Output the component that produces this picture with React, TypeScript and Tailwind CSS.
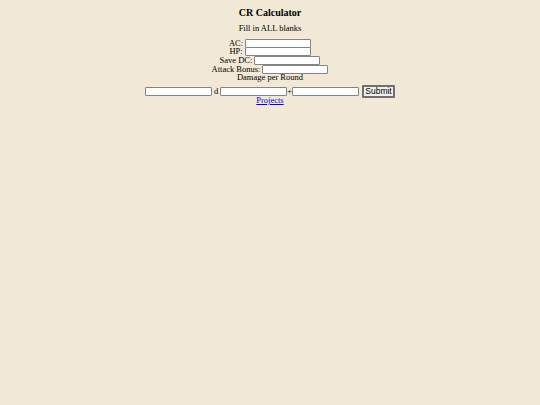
export default function App() {
  const field =
    "w-[66px] h-[9px] bg-white border border-[#858585] rounded-[1px] outline-none";

  return (
    <div
      className="min-h-[405px] w-full bg-[#f2e8d6] text-black text-center flex flex-col items-center pt-[8px] text-[8.5px]"
      style={{ fontFamily: '"Liberation Serif", "Times New Roman", serif' }}
    >
      <h3 className="h-[10px] leading-[10px] text-[10px] font-bold">CR Calculator</h3>
      <p className="mt-[6px] h-[9px] leading-[9px]">Fill in ALL blanks</p>

      <form className="mt-[5.7px] flex flex-col items-center" onSubmit={(e) => e.preventDefault()}>
        <div className="h-[8.7px] flex items-center">
          <span>AC:</span>
          <input className={`${field} ml-[2px]`} />
        </div>
        <div className="h-[8.7px] flex items-center">
          <span>HP:</span>
          <input className={`${field} ml-[2px]`} />
        </div>
        <div className="h-[8.7px] flex items-center">
          <span>Save DC:</span>
          <input className={`${field} ml-[2px]`} />
        </div>
        <div className="h-[8.7px] flex items-center">
          <span>Attack Bonus:</span>
          <input className={`${field} ml-[2px]`} />
        </div>
        <div className="h-[8.7px] leading-[8.7px]">Damage per Round</div>

        <div className="mt-[2.8px] h-[13px] flex items-center">
          <input className={`${field} w-[67px]`} />
          <span className="mx-[2px]">d</span>
          <input className={`${field} w-[67px]`} />
          <span>+</span>
          <input className={`${field} w-[67px]`} />
          <button
            type="submit"
            className="ml-[3px] w-[33px] h-[13px] bg-[#efefef] text-black border-2 border-[#6f6f6f] rounded-[1px] text-[8.5px] leading-[9px] flex items-center justify-center"
            style={{ fontFamily: '"Liberation Sans", Arial, sans-serif' }}
          >
            Submit
          </button>
        </div>
      </form>

      <a href="#" className="mt-[-1.8px] h-[8.7px] leading-[8.7px] text-[#0000ee] underline">
        Projects
      </a>
    </div>
  );
}
